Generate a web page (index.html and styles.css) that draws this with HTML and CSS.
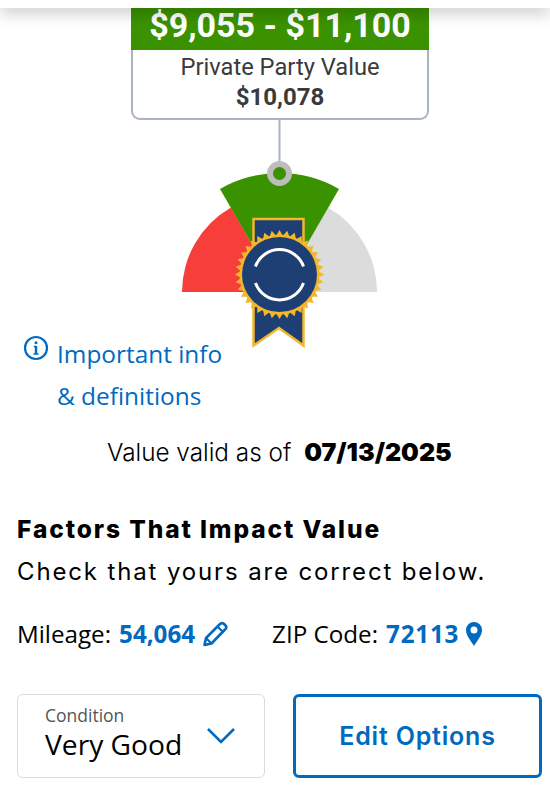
FILE: index.html
```html
<!DOCTYPE html>
<html lang="en">
<head>
  <meta charset="UTF-8">
  <meta name="viewport" content="width=device-width, initial-scale=1.0">
  <title>Vehicle Value</title>
  <link rel="stylesheet" href="styles.css">
</head>
<body>
  <div class="top-bar"></div>
  <div class="page">
    <div class="value-card">
      <div class="range">$9,055 - $11,100</div>
      <div class="card-body">
        <div class="card-label">Private Party Value</div>
        <div class="card-price">$10,078</div>
      </div>
    </div>

    <svg class="gauge" width="550" height="230" viewBox="0 119 550 230">
      <defs>
        <polygon id="tooth" points="279.500,230 283,236 283,313 279.500,319 276,313 276,236" fill="#f2b72c"/>
      </defs>
      <line x1="279.500" y1="119" x2="279.500" y2="165" stroke="#a9b3c1" stroke-width="2"/>
      <path d="M182 292A97.500 97.500 0 0 1 231 207.500L279.500 292Z" fill="#f73e3a"/>
      <path d="M377 292A97.500 97.500 0 0 0 328 207.500L279.500 292Z" fill="#dcdcdc"/>
      <path d="M220 189A119 119 0 0 1 339 189L279.500 292Z" fill="#3a9200"/>
      <circle cx="279.500" cy="173.500" r="9.500" fill="#3a9200" stroke="#bdbdbd" stroke-width="6"/>
      <path d="M253.500 219H303.500V345.500L279 328L253.500 345.500Z" fill="#1e3f73" stroke="#f2b72c" stroke-width="2.500"/>
      <circle cx="279.500" cy="274.500" r="40" fill="#f2b72c"/>
      <use href="#tooth"/>
      <use href="#tooth" transform="rotate(10 279.500 274.500)"/>
      <use href="#tooth" transform="rotate(20 279.500 274.500)"/>
      <use href="#tooth" transform="rotate(30 279.500 274.500)"/>
      <use href="#tooth" transform="rotate(40 279.500 274.500)"/>
      <use href="#tooth" transform="rotate(50 279.500 274.500)"/>
      <use href="#tooth" transform="rotate(60 279.500 274.500)"/>
      <use href="#tooth" transform="rotate(70 279.500 274.500)"/>
      <use href="#tooth" transform="rotate(80 279.500 274.500)"/>
      <use href="#tooth" transform="rotate(90 279.500 274.500)"/>
      <use href="#tooth" transform="rotate(100 279.500 274.500)"/>
      <use href="#tooth" transform="rotate(110 279.500 274.500)"/>
      <use href="#tooth" transform="rotate(120 279.500 274.500)"/>
      <use href="#tooth" transform="rotate(130 279.500 274.500)"/>
      <use href="#tooth" transform="rotate(140 279.500 274.500)"/>
      <use href="#tooth" transform="rotate(150 279.500 274.500)"/>
      <use href="#tooth" transform="rotate(160 279.500 274.500)"/>
      <use href="#tooth" transform="rotate(170 279.500 274.500)"/>
      <circle cx="279.500" cy="274.500" r="37.500" fill="#1e3f73"/>
      <path d="M255.500 266.500A25.500 25.500 0 0 1 303.500 266.500M255.500 283A25.500 25.500 0 0 0 303.500 283" fill="none" stroke="#fff" stroke-width="3"/>
    </svg>

    <div class="info-row">
      <svg class="info-icon" width="26" height="26" viewBox="0 0 26 26">
        <circle cx="13" cy="13" r="11" fill="none" stroke="#0069c0" stroke-width="2.200"/>
        <circle cx="13" cy="7.800" r="1.500" fill="#0069c0"/>
        <path d="M13 11V19" fill="none" stroke="#0069c0" stroke-width="2.400"/>
        <path d="M10.800 11.500H13M10.500 19H15.500" fill="none" stroke="#0069c0" stroke-width="1.400"/>
      </svg>
      <a class="info-link">Important info<br>&amp; definitions</a>
    </div>

    <p class="valid">Value valid as of <b>07/13/2025</b></p>

    <h2 class="factors-title">Factors That Impact Value</h2>
    <p class="factors-sub">Check that yours are correct below.</p>

    <div class="facts">
      <div class="fact">Mileage: <b>54,064</b>
        <svg class="pencil" width="26" height="26" viewBox="0 0 26 26">
          <path d="M2.500 24L4 17L17.500 3.500Q19.500 1.500 21.500 2.500L24 5Q25 7 23 8.500L9.500 22.500Z" fill="none" stroke="#0069c0" stroke-width="2.600" stroke-linejoin="round"/>
          <path d="M15.500 5.500L21 11M4 17L9.500 22.500" fill="none" stroke="#0069c0" stroke-width="2.200"/>
        </svg>
      </div>
      <div class="fact">ZIP Code: <b class="zip">72113</b>
        <svg class="marker" width="18" height="26" viewBox="0 0 18 26">
          <path fill-rule="evenodd" d="M9 25C6.500 20.500 1 15 1 9A8 8 0 0 1 17 9C17 15 11.500 20.500 9 25ZM9 5.500A3.500 3.500 0 1 0 9 12.500A3.500 3.500 0 1 0 9 5.500Z" fill="#0069c0"/>
        </svg>
      </div>
    </div>

    <div class="actions">
      <div class="select-box">
        <div class="select-text">
          <div class="select-label">Condition</div>
          <div class="select-value">Very Good</div>
        </div>
        <svg class="chevron" width="30" height="18" viewBox="0 0 30 18">
          <path d="M2 2L15 15L28 2" fill="none" stroke="#0069c0" stroke-width="2.600"/>
        </svg>
      </div>
      <button class="edit-btn">Edit Options</button>
    </div>
  </div>
</body>
</html>
```

FILE: styles.css
```css
body {
  font-family: 'Open Sans', sans-serif;
  margin: 0;
  padding: 0;
  background-color: #fff;
  color: #000;
  overflow: hidden;
}

.top-bar {
  position: absolute;
  top: 0;
  left: 0;
  width: 100%;
  height: 8px;
  background-color: #fff;
  box-shadow: 0 3px 16px rgba(0, 0, 0, 0.35);
}

.page {
  height: 809px;
  padding: 0 8px 0 17px;
  box-sizing: border-box;
}

.value-card {
  width: 298px;
  margin-left: 114px;
  box-sizing: border-box;
  height: 120px;
  border: 2px solid #a9b3c1;
  border-top: none;
  border-radius: 0 0 9px 9px;
  text-align: center;
}

.range {
  height: 50px;
  line-height: 50px;
  background-color: #3a9200;
  color: #fff;
  font-family: 'Roboto', sans-serif;
  font-weight: 700;
  font-size: 34px;
  margin: 0 -2px;
}

.card-label {
  font-family: 'Roboto', sans-serif;
  font-size: 23.700px;
  line-height: 30px;
  margin-top: 2px;
  color: #3a3a3a;
}

.card-price {
  font-family: 'Roboto', sans-serif;
  font-weight: 700;
  font-size: 24px;
  line-height: 30px;
  color: #3a3a3a;
}

.gauge {
  display: block;
  margin: -1px 0 0 -17px;
}

.info-row {
  display: flex;
  margin-top: -14px;
  padding-left: 6px;
}

.info-icon {
  flex: none;
}

.info-link {
  margin: -2px 0 0 8px;
  color: #0069c0;
  font-size: 24.400px;
  line-height: 42px;
}

.valid {
  margin: 19px 0 0;
  padding-left: 90px;
  font-family: 'Inter', sans-serif;
  font-weight: 300;
  font-size: 24.300px;
  line-height: 32px;
}

.valid b {
  margin-left: 6px;
  font-size: 25px;
  font-weight: 900;
}

.factors-title {
  margin: 45px 0 0;
  font-family: 'Inter', sans-serif;
  font-weight: 800;
  font-size: 24.500px;
  line-height: 32px;
  letter-spacing: 1.900px;
}

.factors-sub {
  margin: 11px 0 0;
  font-family: 'Inter', sans-serif;
  font-size: 24px;
  line-height: 32px;
  letter-spacing: 1.860px;
}

.facts {
  display: flex;
  gap: 44px;
  margin-top: 30px;
  font-size: 24.200px;
  line-height: 32px;
}

.fact {
  display: flex;
  align-items: center;
  gap: 8px;
}

.fact b {
  color: #0069c0;
  font-weight: 700;
}

.fact .zip {
  letter-spacing: 0.800px;
}

.pencil {
  margin-left: -1px;
}

.marker {
  margin-left: -2px;
}

.actions {
  display: flex;
  gap: 28px;
  margin-top: 44px;
}

.select-box {
  display: flex;
  justify-content: space-between;
  align-items: center;
  width: 248px;
  height: 84px;
  box-sizing: border-box;
  padding: 0 28px 0 27px;
  border: 1px solid #dcdcdc;
  border-radius: 6px;
}

.select-text {
  margin-bottom: 7px;
}

.select-label {
  color: #555;
  font-size: 17.500px;
  line-height: 22px;
}

.select-value {
  font-size: 28.200px;
  line-height: 36px;
}

.edit-btn {
  width: 249px;
  height: 84px;
  background-color: #fff;
  border: 3px solid #0069c0;
  border-radius: 6px;
  color: #0069c0;
  font-family: 'Inter', sans-serif;
  font-weight: 600;
  font-size: 25px;
  letter-spacing: 0.800px;
}
```
